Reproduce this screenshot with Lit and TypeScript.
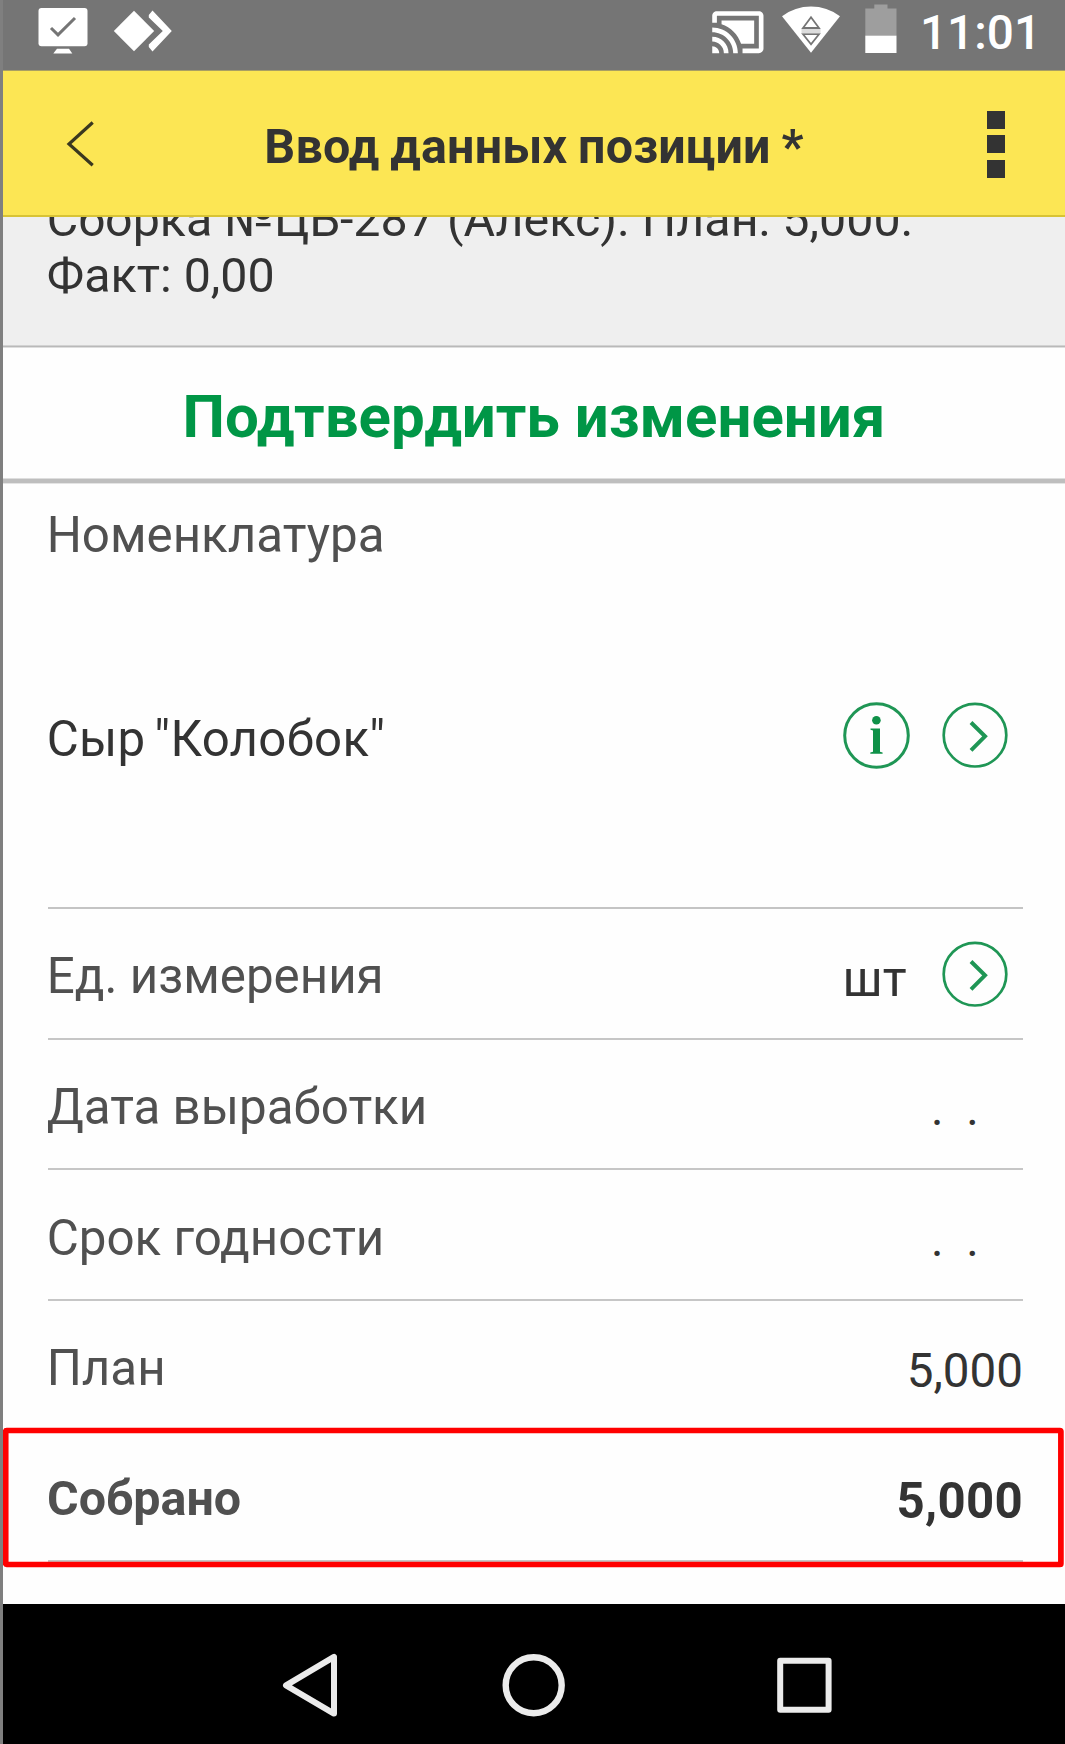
import { LitElement, html, css, nothing } from "lit";
import { customElement } from "lit/decorators.js";
import { classMap } from "lit/directives/class-map.js";

interface Field {
  label: string;
  value: string;
  kind?: "unit" | "date" | "strong";
  line: boolean;
}

const FIELDS: Field[] = [
  { label: "Ед. измерения", value: "шт", kind: "unit", line: true },
  { label: "Дата выработки", value: ".  .", kind: "date", line: true },
  { label: "Срок годности", value: ".  .", kind: "date", line: true },
  { label: "План", value: "5,000", line: false },
  { label: "Собрано", value: "5,000", kind: "strong", line: true },
];

const openIcon = html`<svg class="round" width="68" height="68" viewBox="0 0 68 68" fill="none" stroke="#1f9655">
  <circle cx="34" cy="34.2" r="31.3" stroke-width="2.7" />
  <path d="M30 21.5 44 35.3 30 49.3" stroke-width="4" />
</svg>`;

const infoIcon = html`<svg class="round" width="68" height="68" viewBox="0 0 68 68">
  <circle cx="34.5" cy="34.5" r="31.8" fill="none" stroke="#1f9655" stroke-width="3" />
  <circle cx="34.4" cy="19.2" r="4.3" fill="#0f9148" />
  <path d="M28.5 27.6H38V50.8L40.6 51.4V52.8H28.3V51.4L31 50.8V29.4L28.5 28.8Z" fill="#0f9148" />
</svg>`;

@customElement("app-root")
export class AppRoot extends LitElement {
  static styles = css`
    :host {
      display: block;
      font-family: Roboto, "Liberation Sans", sans-serif;
      color: #333;
    }
    * {
      box-sizing: border-box;
    }
    svg {
      display: block;
      flex: none;
    }
    .screen {
      display: flex;
      flex-direction: column;
      width: 1065px;
      height: 1744px;
      overflow: hidden;
      background: #fefefe;
      border-left: 3px solid #333;
      border-image: linear-gradient(90deg, #7f7f7f 66%, #333 66%) 0 0 0 3;
    }
    .status {
      display: flex;
      height: 71px;
      flex: none;
      background: #757575;
      border-bottom: 1px solid #a99f63;
      padding-left: 35px;
      color: #fff;
    }
    .status .grow {
      flex: 1;
    }
    .diamond {
      margin-left: 25px;
    }
    .wifi {
      margin-left: 15px;
    }
    .battery {
      margin-left: 23px;
    }
    .clock {
      margin-left: 23px;
      width: 145px;
      font-size: 47.7px;
      font-weight: 500;
      line-height: 66.6px;
      white-space: nowrap;
    }
    .header {
      display: flex;
      align-items: center;
      flex: none;
      height: 146px;
      padding-top: 2px;
      background: #fce654;
      border-bottom: 2px solid #d8c335;
    }
    .back,
    .menu {
      width: 100px;
      flex: none;
    }
    .back {
      padding-left: 63px;
    }
    .menu {
      display: flex;
      flex-direction: column;
      gap: 6.5px;
      padding-left: 22px;
    }
    .menu i {
      width: 18px;
      height: 18px;
      background: #333;
    }
    .title {
      flex: 1;
      padding-top: 6px;
      text-align: center;
      font-size: 48.4px;
      font-weight: 700;
      letter-spacing: 0.2px;
      word-spacing: -1.5px;
      line-height: 58px;
      white-space: nowrap;
    }
    .info {
      display: flex;
      flex-direction: column;
      justify-content: flex-end;
      flex: none;
      height: 128px;
      padding: 0 0 41.5px 43.8px;
      overflow: hidden;
      background: #efefef;
      font-size: 48.4px;
      line-height: 55.6px;
      white-space: nowrap;
    }
    .info-line {
      flex: none;
      height: 3px;
      background: linear-gradient(#d2d2d2 33%, #b9b9b9 33% 66%, #dedede 66%);
    }
    .confirm {
      flex: none;
      height: 130px;
      padding-top: 2.5px;
      text-align: center;
      color: #009646;
      font-size: 60px;
      font-weight: 700;
      line-height: 131px;
      white-space: nowrap;
    }
    .confirm-line {
      flex: none;
      height: 6px;
      background: linear-gradient(#dedede 17%, #bebebe 17% 83%, #e4e4e4 83%);
    }
    .form {
      flex: 1;
      min-height: 0;
      padding: 0 42px 0 44.5px;
    }
    .label,
    .value {
      line-height: 58px;
      white-space: pre;
    }
    .label {
      color: #505050;
      font-size: 49.3px;
      margin-left: -0.8px;
    }
    .item {
      height: 425px;
      padding-top: 22px;
      border-bottom: 2px solid #c4c4c4;
    }
    .item-body {
      display: flex;
      align-items: flex-start;
      padding-right: 14px;
    }
    .item-body .name {
      flex: 1;
      margin: 146px 0 0 -0.7px;
      font-size: 49.2px;
      letter-spacing: 0.28px;
      word-spacing: -3.6px;
      line-height: 58px;
    }
    .item-body .round {
      margin: 137px 0 0 31px;
    }
    .row {
      position: relative;
      display: flex;
      justify-content: space-between;
      align-items: flex-start;
      height: 130.6px;
      padding-top: 38.4px;
    }
    .row.line {
      border-bottom: 2px solid #c6c6c6;
    }
    .value {
      display: flex;
      margin-top: 2.4px;
      font-size: 47.6px;
    }
    .unit .value {
      margin-right: 14px;
      font-size: 49.6px;
    }
    .unit .round {
      margin: -10.2px 0 0 34.5px;
    }
    .date .value {
      margin-right: 44.5px;
      letter-spacing: -0.3px;
    }
    .strong .label {
      font-size: 48.4px;
      font-weight: 700;
      margin-top: 0.4px;
      margin-left: -0.4px;
    }
    .strong .value {
      font-size: 49.2px;
      font-weight: 700;
      letter-spacing: 0.3px;
    }
    .frame {
      position: absolute;
      left: -44.5px;
      top: -4.4px;
    }
    .nav {
      display: flex;
      align-items: flex-start;
      flex: none;
      height: 140px;
      padding: 46px 0 0 277px;
      background: #000;
    }
    .nav svg + svg {
      margin-left: 159px;
    }
    .nav svg:last-child {
      margin-left: 207px;
    }
  `;

  private renderStatus() {
    return html`<div class="status">
      <svg width="50" height="70" viewBox="38 0 50 70" fill="#fff">
        <rect x="38.5" y="8" width="49" height="38.3" rx="3" />
        <path d="M57 48.8H69L72.3 53.5H53.3Z" />
        <path d="M51 28 58 34.8 75 18" fill="none" stroke="#757575" stroke-width="3" />
      </svg>
      <svg class="diamond" width="59" height="70" viewBox="113 0 59 70" fill="#fff">
        <path d="M134 10.8 154.2 31 134 51.2 113.8 31Z" />
        <path d="M152.5 10.5 171.8 31 152.5 51.5 148.8 47V44.5L162.8 31 148.8 17.5V15Z" />
      </svg>
      <span class="grow"></span>
      <svg width="54" height="70" viewBox="712 0 54 70" fill="#fff">
        <g transform="translate(709.9 4.2) scale(2.33)">
          <path
            d="M21 3H3c-1.1 0-2 .9-2 2v3h2V5h18v14h-7v2h7c1.1 0 2-.9 2-2V5c0-1.1-.9-2-2-2zM1 18v3h3c0-1.66-1.34-3-3-3zm0-4v2c2.76 0 5 2.24 5 5h2c0-3.87-3.13-7-7-7zm0-4v2c4.97 0 9 4.03 9 9h2c0-6.08-4.93-11-11-11zM19 7H5v1.63c3.96 1.28 7.09 4.41 8.37 8.37H19V7z"
          />
        </g>
      </svg>
      <svg class="wifi" width="60" height="70" viewBox="781 0 60 70">
        <path d="M811 52.8 782 16.3Q795 6.6 811 6.6T840 16.3Z" fill="#fff" />
        <g fill="none" stroke="#757575" stroke-width="1.8">
          <path d="M811 17.3 803 28H819Z" />
          <path d="M811 44.3 803 34.2H819Z" />
        </g>
        <rect x="801.5" y="29" width="19" height="4.2" fill="#dcdcdc" />
      </svg>
      <svg class="battery" width="33" height="70" viewBox="864 0 33 70">
        <path d="M874.3 4.5H887.5V8.5H896.5V36H865.3V8.5H874.3Z" fill="#9e9e9e" />
        <rect x="865.3" y="35.7" width="31.2" height="17.3" fill="#fff" />
      </svg>
      <span class="clock">11:01</span>
    </div>`;
  }

  private renderRow(f: Field) {
    const classes = {
      row: true,
      line: f.line,
      unit: f.kind === "unit",
      date: f.kind === "date",
      strong: f.kind === "strong",
    };
    return html`<div class=${classMap(classes)}>
      <span class="label">${f.label}</span>
      <span class="value">${f.value}${f.kind === "unit" ? openIcon : nothing}</span>
      ${f.kind === "strong"
        ? html`<svg class="frame" width="1062" height="142" viewBox="0 0 1062 142" fill="none">
            <rect x="2.7" y="3.5" width="1055.2" height="134" rx="1" stroke="#f00" stroke-width="5.7" />
          </svg>`
        : nothing}
    </div>`;
  }

  render() {
    return html`<div class="screen">
      ${this.renderStatus()}
      <div class="header">
        <div class="back">
          <svg width="32" height="50" viewBox="66 119 32 50" fill="none" stroke="#3a381f" stroke-width="3.2">
            <path d="M92.7 122.5 69 144 92.7 165.2" />
          </svg>
        </div>
        <div class="title">Ввод данных позиции *</div>
        <div class="menu"><i></i><i></i><i></i></div>
      </div>
      <div class="info">
        <div>Сборка №ЦБ-287 (Алекс). План: 5,000.</div>
        <div>Факт: 0,00</div>
      </div>
      <div class="info-line"></div>
      <div class="confirm">Подтвердить изменения</div>
      <div class="confirm-line"></div>
      <div class="form">
        <div class="item">
          <div class="label">Номенклатура</div>
          <div class="item-body">
            <span class="name">Сыр "Колобок"</span>
            ${infoIcon}${openIcon}
          </div>
        </div>
        ${FIELDS.map((f) => this.renderRow(f))}
      </div>
      <div class="nav">
        <svg width="60" height="70" viewBox="280 1650 60 70" fill="none" stroke="#ebebeb" stroke-width="6" stroke-linejoin="round">
          <path d="M286 1685.3 334 1656.8V1713.6Z" />
        </svg>
        <svg width="70" height="70" viewBox="499 1650 70 70" fill="none" stroke="#ebebeb" stroke-width="6.4">
          <circle cx="533.7" cy="1685.3" r="28" />
        </svg>
        <svg width="60" height="70" viewBox="776 1650 60 70" fill="none" stroke="#ebebeb" stroke-width="6" stroke-linejoin="round">
          <rect x="780.2" y="1660.8" width="48.4" height="49" />
        </svg>
      </div>
    </div>`;
  }
}
